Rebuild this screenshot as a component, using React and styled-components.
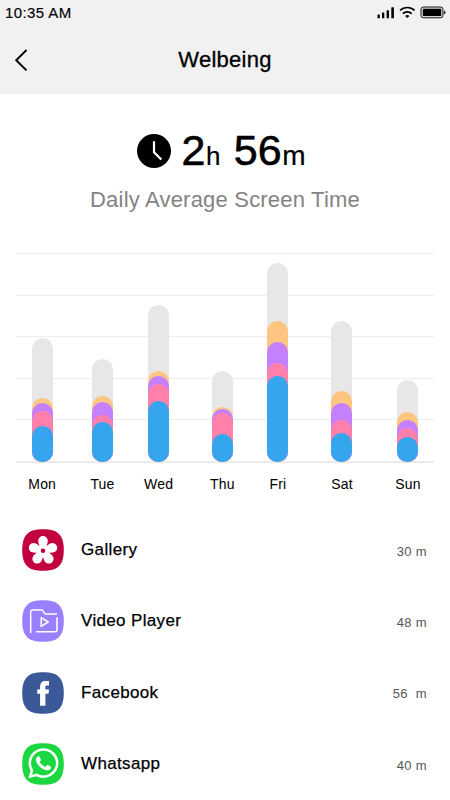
import React from 'react';
import styled, {createGlobalStyle} from 'styled-components';
import {FaWhatsapp} from 'react-icons/fa';

const GlobalStyle = createGlobalStyle`
    *{
        box-sizing: border-box;
    }
    body{
        margin: 0;
        background-color: #fff;
        color: #000;
        font-family: "Liberation Sans", Arial, sans-serif;
    }
`

const Page = styled.div`
    width: 450px;
    height: 800px;
    overflow: hidden;
    background-color: #fff;
`

const Header = styled.header`
    height: 94px;
    background-color: #f1f1f1;
`

const StatusBar = styled.div`
    display: flex;
    align-items: center;
    justify-content: space-between;
    height: 25px;
    padding: 0 4px 0 5px;
    font-size: 15px;
    letter-spacing: 0.4px;
    -webkit-text-stroke: 0.15px #000;
    svg{
        display: block;
    }
`

const TitleBar = styled.div`
    display: grid;
    grid-template-columns: 42px 1fr 42px;
    align-items: center;
    height: 70px;
    h1{
        margin: 0;
        font-size: 22px;
        font-weight: 400;
        text-align: center;
        letter-spacing: 0.25px;
        -webkit-text-stroke: 0.3px #000;
    }
`

const BackButton = styled.button`
    display: flex;
    padding: 0 0 0 14px;
    border: 0 none;
    background: transparent;
`

const Summary = styled.section`
    display: flex;
    flex-direction: column;
    align-items: center;
    height: 159px;
    padding-top: 32px;
    p{
        margin: 11px 0 0;
        font-size: 22px;
        line-height: 26px;
        letter-spacing: 0.2px;
        color: #838383;
    }
`

const Total = styled.div`
    display: flex;
    align-items: center;
    height: 50px;
    padding-right: 8px;
    svg{
        margin-right: 11px;
    }
`

const Time = styled.span`
    margin-top: 3px;
    font-size: 43px;
    line-height: 50px;
    white-space: pre;
    -webkit-text-stroke: 0.6px #000;
    small{
        font-size: 26px;
        -webkit-text-stroke: 0.2px #000;
    }
    small:first-of-type{
        margin: 0 1.5px 0 0.5px;
    }
    small:last-of-type{
        margin-left: 0.5px;
        font-size: 28px;
    }
`

const Chart = styled.section`
    display: grid;
    height: 210px;
    margin: 0 16px;
    > *{
        grid-area: 1 / 1;
    }
`

const Lines = styled.div`
    display: flex;
    flex-direction: column;
    justify-content: space-between;
    height: 210px;
`

const Line = styled.div`
    height: ${props => props.$base ? 2 : 1}px;
    background-color: ${props => props.$base ? '#ebebeb' : '#ededed'};
`

const Days = styled.div`
    display: flex;
    padding-left: 15.7px;
`

const Day = styled.div`
    display: flex;
    flex-direction: column;
    align-items: center;
    width: 21px;
    margin-left: ${props => props.$gap}px;
    span{                                   /* 요일 이름 */
        margin-top: 14.5px;
        font-size: 14px;
        line-height: 16px;
        letter-spacing: 0.2px;
    }
`

const Bar = styled.div`
    display: grid;
    align-items: end;
    flex: none;
    width: 21px;
    height: 208.5px;
`

const Segment = styled.div`
    grid-area: 1 / 1;
    height: ${props => props.$size}px;
    border-radius: 10.5px;
    background-color: ${props => props.$color};
`

const AppList = styled.ul`
    margin: 66px 0 0;
    padding: 0 23px 0 22px;
    list-style: none;
`

const AppRow = styled.li`
    display: flex;
    align-items: center;
    height: 42px;
    margin-bottom: 29.4px;
`

const AppIcon = styled.svg`
    width: 42px;
    height: 42px;
    margin-right: 17px;
`

const AppName = styled.span`
    flex: 1;
    font-size: 17px;
    letter-spacing: 0.35px;
    -webkit-text-stroke: 0.25px #000;
`

const AppTime = styled.span`
    padding-top: 2px;
    font-size: 13px;
    letter-spacing: 0.35px;
    white-space: pre;
    color: #555;
`

/* 회색, 주황, 보라, 분홍, 파랑 순서 */
const colors = ['#e7e7e7', '#fec580', '#c580ff', '#ff80aa', '#35a5ee'];

const days = [
    {name: 'Mon', gap: 0, sizes: [123.5, 63.5, 59, 50.5, 36]},
    {name: 'Tue', gap: 39.3, sizes: [102.5, 66, 59.5, 47, 40]},
    {name: 'Wed', gap: 35.2, sizes: [157, 90.5, 86, 77.5, 60.5]},
    {name: 'Thu', gap: 42.8, sizes: [90.5, 54.5, 52.5, 48.5, 27.5]},
    {name: 'Fri', gap: 34.5, sizes: [198.5, 140.5, 119.5, 98.5, 86]},
    {name: 'Sat', gap: 43, sizes: [140.5, 70.5, 58.5, 41.5, 29]},
    {name: 'Sun', gap: 45, sizes: [82, 50, 41.5, 33.5, 24.5]},
];

const Squircle = ({color}) => (
    <path fill={color} d="M21 .2C35 .2 41.8 5 41.8 21S35 41.8 21 41.8 .2 37 .2 21 7 .2 21 .2Z" />
);

const GalleryIcon = () => (
    <AppIcon viewBox="0 0 42 42">
        <Squircle color="#c2003f" />
        {[0, 72, 144, 216, 288].map(angle => (
            <path
                key={angle}
                fill="#fff"
                transform={`rotate(${angle} 21 21.8)`}
                d="M18.4 22C18.4 17.5 16.2 15.2 16.2 11.9a4.8 4.8 0 0 1 9.6 0C25.8 15.2 23.6 17.5 23.6 22Z"
            />
        ))}
        <circle cx="21" cy="21.8" r="5.6" fill="#fff" />
        <circle cx="21" cy="21.8" r="2.3" fill="#c2003f" />
    </AppIcon>
);

const VideoIcon = () => (
    <AppIcon viewBox="0 0 42 42" fill="none">
        <Squircle color="#9a80ff" />
        <g stroke="#fff" strokeWidth="1.5">
            <path d="M8.7 33V11.6q0-1.6 1.6-1.6h9q1 0 1.6.9l1.5 2.2q.6.9 1.6.9h11" />
            <path d="M35 17.3V29.8q0 2-2 2H14.3" />
            <path d="M19.2 17.6v8.8l7-4.4Z" strokeLinejoin="round" />
        </g>
    </AppIcon>
);

const FacebookIcon = () => (
    <AppIcon viewBox="0 0 42 42">
        <Squircle color="#3b5998" />
        <path
            fill="#fff"
            d="M18.1 33.7V21.7h-2.9v-4.2h2.9v-3c0-3.6 1.9-5.5 5.3-5.5h3.6v4.4h-2c-1.3 0-1.6.5-1.6 1.6v2.5H27l-.5 4.2h-3.1v12Z"
        />
    </AppIcon>
);

const WhatsappIcon = () => (
    <AppIcon viewBox="0 0 42 42">
        <Squircle color="#1bd741" />
        <FaWhatsapp x="4.3" y="3.1" size={34.3} color="#fff" />
    </AppIcon>
);

const apps = [
    {name: 'Gallery', time: '30 m', Icon: GalleryIcon},
    {name: 'Video Player', time: '48 m', Icon: VideoIcon},
    {name: 'Facebook', time: '56  m', Icon: FacebookIcon},
    {name: 'Whatsapp', time: '40 m', Icon: WhatsappIcon},
];

const StatusIcons = () => (
    <svg width="69" height="14" viewBox="0 0 69 14">
        <g>
            <rect x="0.5" y="8.4" width="2.3" height="3.8" rx=".5" />
            <rect x="5" y="6.6" width="2.3" height="5.6" rx=".5" />
            <rect x="9.6" y="4.2" width="2.4" height="8" rx=".5" />
            <rect x="14.3" y="1.2" width="2.6" height="11" rx=".5" />
        </g>
        <g fill="none" stroke="#000" strokeWidth="1.7">
            <path d="M23 4.4a10.6 10.6 0 0 1 14.6 0" />
            <path d="M25.8 7.6a6.6 6.6 0 0 1 9 0" />
        </g>
        <path d="M28.1 9.9a3.3 3.3 0 0 1 4.4 0l-2.2 2.1Z" />
        <rect x="44" y="1" width="22" height="10.8" rx="2.3" fill="#d5d5d5" stroke="#000" strokeWidth=".9" />
        <rect x="45.9" y="2.8" width="18.3" height="7.2" rx=".6" />
        <path d="M67.2 4.5q1.3.4 1.3 2t-1.3 2Z" />
    </svg>
);

function App() {
    return (
        <Page>
            <GlobalStyle />
            <Header>
                <StatusBar>
                    <span>10:35 AM</span>
                    <StatusIcons />
                </StatusBar>
                <TitleBar>
                    <BackButton aria-label="Back">
                        <svg width="14" height="24" viewBox="0 0 14 24" fill="none" stroke="#000" strokeWidth="1.9">
                            <path d="M12.5 2 2.2 12.2 12.5 22.4" />
                        </svg>
                    </BackButton>
                    <h1>Welbeing</h1>
                </TitleBar>
            </Header>
            <Summary>
                <Total>
                    <svg width="34" height="34" viewBox="0 0 34 34">
                        <circle cx="17" cy="17" r="17" />
                        <path d="M17 7.3v10.9l7.3 7.3" fill="none" stroke="#fff" strokeWidth="2.2" />
                    </svg>
                    <Time>2<small>h</small> 56<small>m</small></Time>
                </Total>
                <p>Daily Average Screen Time</p>
            </Summary>
            <Chart>
                <Lines>
                    <Line />
                    <Line />
                    <Line />
                    <Line />
                    <Line />
                    <Line $base />
                </Lines>
                <Days>
                    {days.map(day => (
                        <Day key={day.name} $gap={day.gap}>
                            <Bar>
                                {day.sizes.map((size, i) => (
                                    <Segment key={colors[i]} $size={size} $color={colors[i]} />
                                ))}
                            </Bar>
                            <span>{day.name}</span>
                        </Day>
                    ))}
                </Days>
            </Chart>
            <AppList>
                {apps.map(({name, time, Icon}) => (
                    <AppRow key={name}>
                        <Icon />
                        <AppName>{name}</AppName>
                        <AppTime>{time}</AppTime>
                    </AppRow>
                ))}
            </AppList>
        </Page>
    );
}

export default App;
